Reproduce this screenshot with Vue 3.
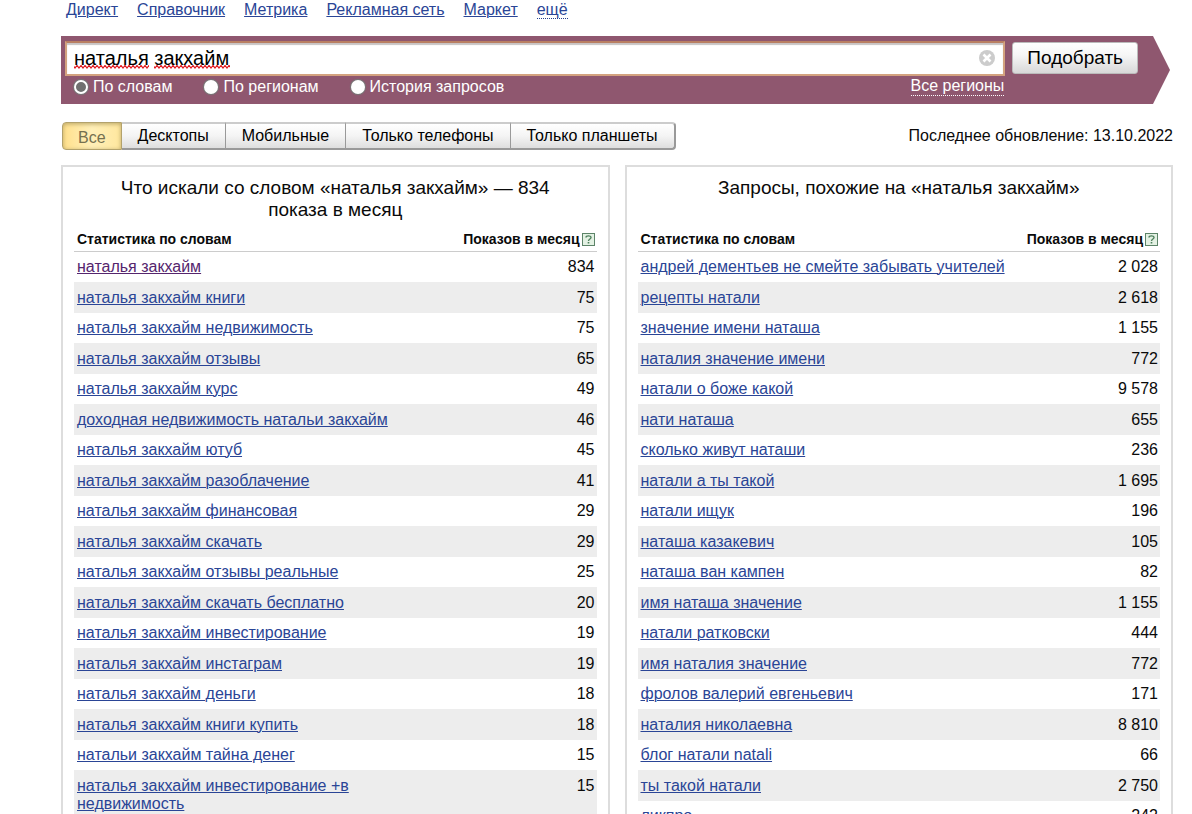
<script setup>
import { ref } from 'vue'

const services = ['Директ', 'Справочник', 'Метрика', 'Рекламная сеть', 'Маркет']
const query = ref('наталья закхайм')
const mode = ref('words')
const modes = [
  { id: 'words', label: 'По словам' },
  { id: 'regions', label: 'По регионам' },
  { id: 'history', label: 'История запросов' }
]
const device = ref('Все')
const devices = ['Все', 'Десктопы', 'Мобильные', 'Только телефоны', 'Только планшеты']

const panels = [
  {
    title: 'Что искали со словом «наталья закхайм» — 834 показа в месяц',
    rows: [
      ['наталья закхайм', '834'],
      ['наталья закхайм книги', '75'],
      ['наталья закхайм недвижимость', '75'],
      ['наталья закхайм отзывы', '65'],
      ['наталья закхайм курс', '49'],
      ['доходная недвижимость натальи закхайм', '46'],
      ['наталья закхайм ютуб', '45'],
      ['наталья закхайм разоблачение', '41'],
      ['наталья закхайм финансовая', '29'],
      ['наталья закхайм скачать', '29'],
      ['наталья закхайм отзывы реальные', '25'],
      ['наталья закхайм скачать бесплатно', '20'],
      ['наталья закхайм инвестирование', '19'],
      ['наталья закхайм инстаграм', '19'],
      ['наталья закхайм деньги', '18'],
      ['наталья закхайм книги купить', '18'],
      ['натальи закхайм тайна денег', '15'],
      ['наталья закхайм инвестирование +в недвижимость', '15']
    ]
  },
  {
    title: 'Запросы, похожие на «наталья закхайм»',
    rows: [
      ['андрей дементьев не смейте забывать учителей', '2 028'],
      ['рецепты натали', '2 618'],
      ['значение имени наташа', '1 155'],
      ['наталия значение имени', '772'],
      ['натали о боже какой', '9 578'],
      ['нати наташа', '655'],
      ['сколько живут наташи', '236'],
      ['натали а ты такой', '1 695'],
      ['натали ищук', '196'],
      ['наташа казакевич', '105'],
      ['наташа ван кампен', '82'],
      ['имя наташа значение', '1 155'],
      ['натали ратковски', '444'],
      ['имя наталия значение', '772'],
      ['фролов валерий евгеньевич', '171'],
      ['наталия николаевна', '8 810'],
      ['блог натали natali', '66'],
      ['ты такой натали', '2 750'],
      ['ликпро', '242']
    ]
  }
]
</script>

<template>
  <div class="page">
    <nav class="services">
      <a v-for="s in services" :key="s" href="#">{{ s }}</a>
      <a href="#" class="more">ещё</a>
    </nav>

    <form class="search" @submit.prevent>
      <div class="field-column">
        <div class="field">
          <input v-model="query" class="query" type="text" aria-label="Запрос" spellcheck="false" />
          <svg class="squiggle" width="156" height="4" viewBox="0 0 156 4" aria-hidden="true">
            <defs>
              <pattern id="wave" width="4" height="4" patternUnits="userSpaceOnUse">
                <path d="M-1 0.5 L1 3 L3 0.5 L5 3" fill="none" stroke="#e0161c" stroke-width="1.2" />
              </pattern>
            </defs>
            <rect width="75" height="4" fill="url(#wave)" />
            <rect x="80" width="76" height="4" fill="url(#wave)" />
          </svg>
          <button class="clear" type="button" aria-label="Очистить" @click="query = ''">
            <svg width="16" height="16" viewBox="0 0 16 16">
              <circle cx="8" cy="8" r="8" fill="#ccc" />
              <path d="M4.5 4.5 L11.5 11.5 M11.5 4.5 L4.5 11.5" stroke="#fff" stroke-width="2.6" />
            </svg>
          </button>
        </div>
        <div class="options">
          <label v-for="m in modes" :key="m.id">
            <input v-model="mode" type="radio" name="mode" :value="m.id" />{{ m.label }}
          </label>
          <a href="#" class="regions">Все регионы</a>
        </div>
      </div>
      <button class="submit" type="submit">Подобрать</button>
    </form>

    <div class="toolbar">
      <div class="tabs">
        <button
          v-for="d in devices"
          :key="d"
          type="button"
          :class="{ active: d === device }"
          @click="device = d"
        >{{ d }}</button>
      </div>
      <span class="updated">Последнее обновление: 13.10.2022</span>
    </div>

    <main class="panels">
      <section v-for="(p, i) in panels" :key="i" class="panel">
        <h2>{{ p.title }}</h2>
        <table>
          <thead>
            <tr>
              <th class="phrase">Статистика по словам</th>
              <th class="count">
                <span class="count-head">Показов в месяц<a href="#" class="help" aria-label="Справка"><svg width="13" height="13" viewBox="0 0 13 13">
                  <rect x="0.5" y="0.5" width="12" height="12" fill="#e3f1e3" stroke="#5c8468" />
                  <path d="M4 4.5 C4 2.4 9 2.2 9 4.5 C9 6 6.5 6 6.5 8" fill="none" stroke="#4d7f5c" stroke-width="1.4" />
                  <rect x="5.7" y="9" width="1.6" height="1.5" fill="#4d7f5c" />
                </svg></a></span>
              </th>
            </tr>
          </thead>
          <tbody>
            <tr v-for="(r, j) in p.rows" :key="j">
              <td><a href="#" :class="{ visited: i === 0 && j === 0 }">{{ r[0] }}</a></td>
              <td class="count">{{ r[1] }}</td>
            </tr>
          </tbody>
        </table>
      </section>
    </main>
  </div>
</template>

<style>
html {
  overflow: hidden;
}
body {
  background: #fff;
}
</style>

<style scoped>
* {
  box-sizing: border-box;
}
.page {
  height: 100vh;
  overflow: hidden;
  padding: 0 19px 0 61px;
  color: #0a0a0a;
  font-family: "Liberation Sans", Arial, sans-serif;
  font-size: 16px;
  line-height: 18px;
}
button,
input {
  font-family: inherit;
}
a {
  color: #2a4596;
  text-decoration: underline;
  text-underline-offset: 1px;
  text-decoration-thickness: 1px;
}
.services {
  display: flex;
  gap: 19px;
  height: 36px;
  padding: 1px 0 0 5px;
}
.services .more {
  align-self: flex-start;
  height: 18px;
  border-bottom: 1px dotted #24408e;
  text-decoration: none;
}
.search {
  display: flex;
  gap: 7px;
  align-items: flex-start;
  height: 68px;
  margin-right: 3px;
  padding: 5px 32px 0 4px;
  background: #8f576f;
  clip-path: polygon(0 0, calc(100% - 17px) 0, 100% 50%, calc(100% - 17px) 100%, 0 100%);
}
.field-column {
  flex: 1;
}
.field {
  position: relative;
}
.query {
  display: block;
  width: 100%;
  height: 35px;
  padding: 0 36px 0 7px;
  border: 2px solid #d3a27f;
  border-top-color: #b97f63;
  border-radius: 0;
  outline: none;
  background: #fff;
  box-shadow: inset 0 2px 1px #c8c4c4;
  color: #000;
  font-size: 20px;
}
.squiggle {
  position: absolute;
  left: 9px;
  bottom: 7px;
}
.clear {
  position: absolute;
  top: 9px;
  right: 10px;
  display: flex;
  padding: 0;
  border: 0;
  background: none;
}
.options {
  display: flex;
  align-items: center;
  gap: 32px;
  padding: 1px 1px 0 9px;
  color: #fff;
}
.options label {
  display: flex;
  align-items: center;
  gap: 5px;
}
.options input {
  appearance: none;
  width: 14px;
  height: 14px;
  margin: 0;
  border-radius: 50%;
  background: #fff;
  box-shadow: 0 0 1px 1px #777;
}
.options input:checked {
  border: 2px solid #fff;
  background: #707070;
}
.regions {
  margin-left: auto;
  border-bottom: 1px dotted #fff;
  color: #fff;
  text-decoration: none;
}
.submit {
  height: 32px;
  margin-top: 1px;
  padding: 0 14px 1px;
  border: 1px solid #bbb;
  border-radius: 3px;
  background: linear-gradient(#fff, #f6f6f6 40%, #d8d8d8);
  color: #000;
  font-size: 19px;
}
.toolbar {
  display: flex;
  align-items: center;
  justify-content: space-between;
  margin: 18px 0 15px;
  padding-left: 1px;
}
.tabs {
  display: flex;
}
.tabs button {
  height: 28px;
  padding: 0 16px;
  border: 1px solid #999;
  border-width: 2px 1px 2px 0;
  border-top-color: #ccc;
  background: linear-gradient(#fff, #f4f4f4 50%, #dedede);
  color: #000;
  font-size: 16px;
}
.tabs button:first-child {
  padding: 0 15px;
  border-left-width: 1px;
  border-radius: 4px 0 0 4px;
}
.tabs button:last-child {
  border-right-width: 2px;
  border-radius: 0 4px 4px 0;
}
.tabs button.active {
  padding-top: 3px;
  border: 1px solid #b3a26c;
  background: linear-gradient(90deg, #ffe08c, #ffefb8 50%, #ffe79e);
  box-shadow: inset 0 1px 4px #b9a566;
  color: #75704f;
}
.panels {
  display: grid;
  grid-template-columns: 1fr 1fr;
  gap: 15px;
}
.panel {
  padding: 10px 11px 40px;
  border: 2px solid #ddd;
}
h2 {
  display: flex;
  min-height: 44px;
  margin: 0 36px;
  justify-content: center;
  font-size: 19px;
  font-weight: normal;
  line-height: 22px;
  text-align: center;
}
table {
  width: 100%;
  table-layout: fixed;
  border-spacing: 0;
}
th {
  height: 31px;
  padding: 6px 3px 0;
  border-bottom: 1px solid #ccc;
  font-size: 14px;
  text-align: left;
}
td {
  height: 30px;
  padding: 6px 3px;
  vertical-align: top;
}
.phrase {
  width: 72%;
}
.count {
  padding-right: 2px;
  text-align: right;
  white-space: nowrap;
}
.count-head {
  display: flex;
  align-items: center;
  justify-content: flex-end;
  gap: 2px;
}
.help {
  display: flex;
}
tr:nth-child(even) td {
  height: 31px;
  padding-top: 7px;
  background: #ededed;
}
.visited {
  color: #55256d;
}
</style>
